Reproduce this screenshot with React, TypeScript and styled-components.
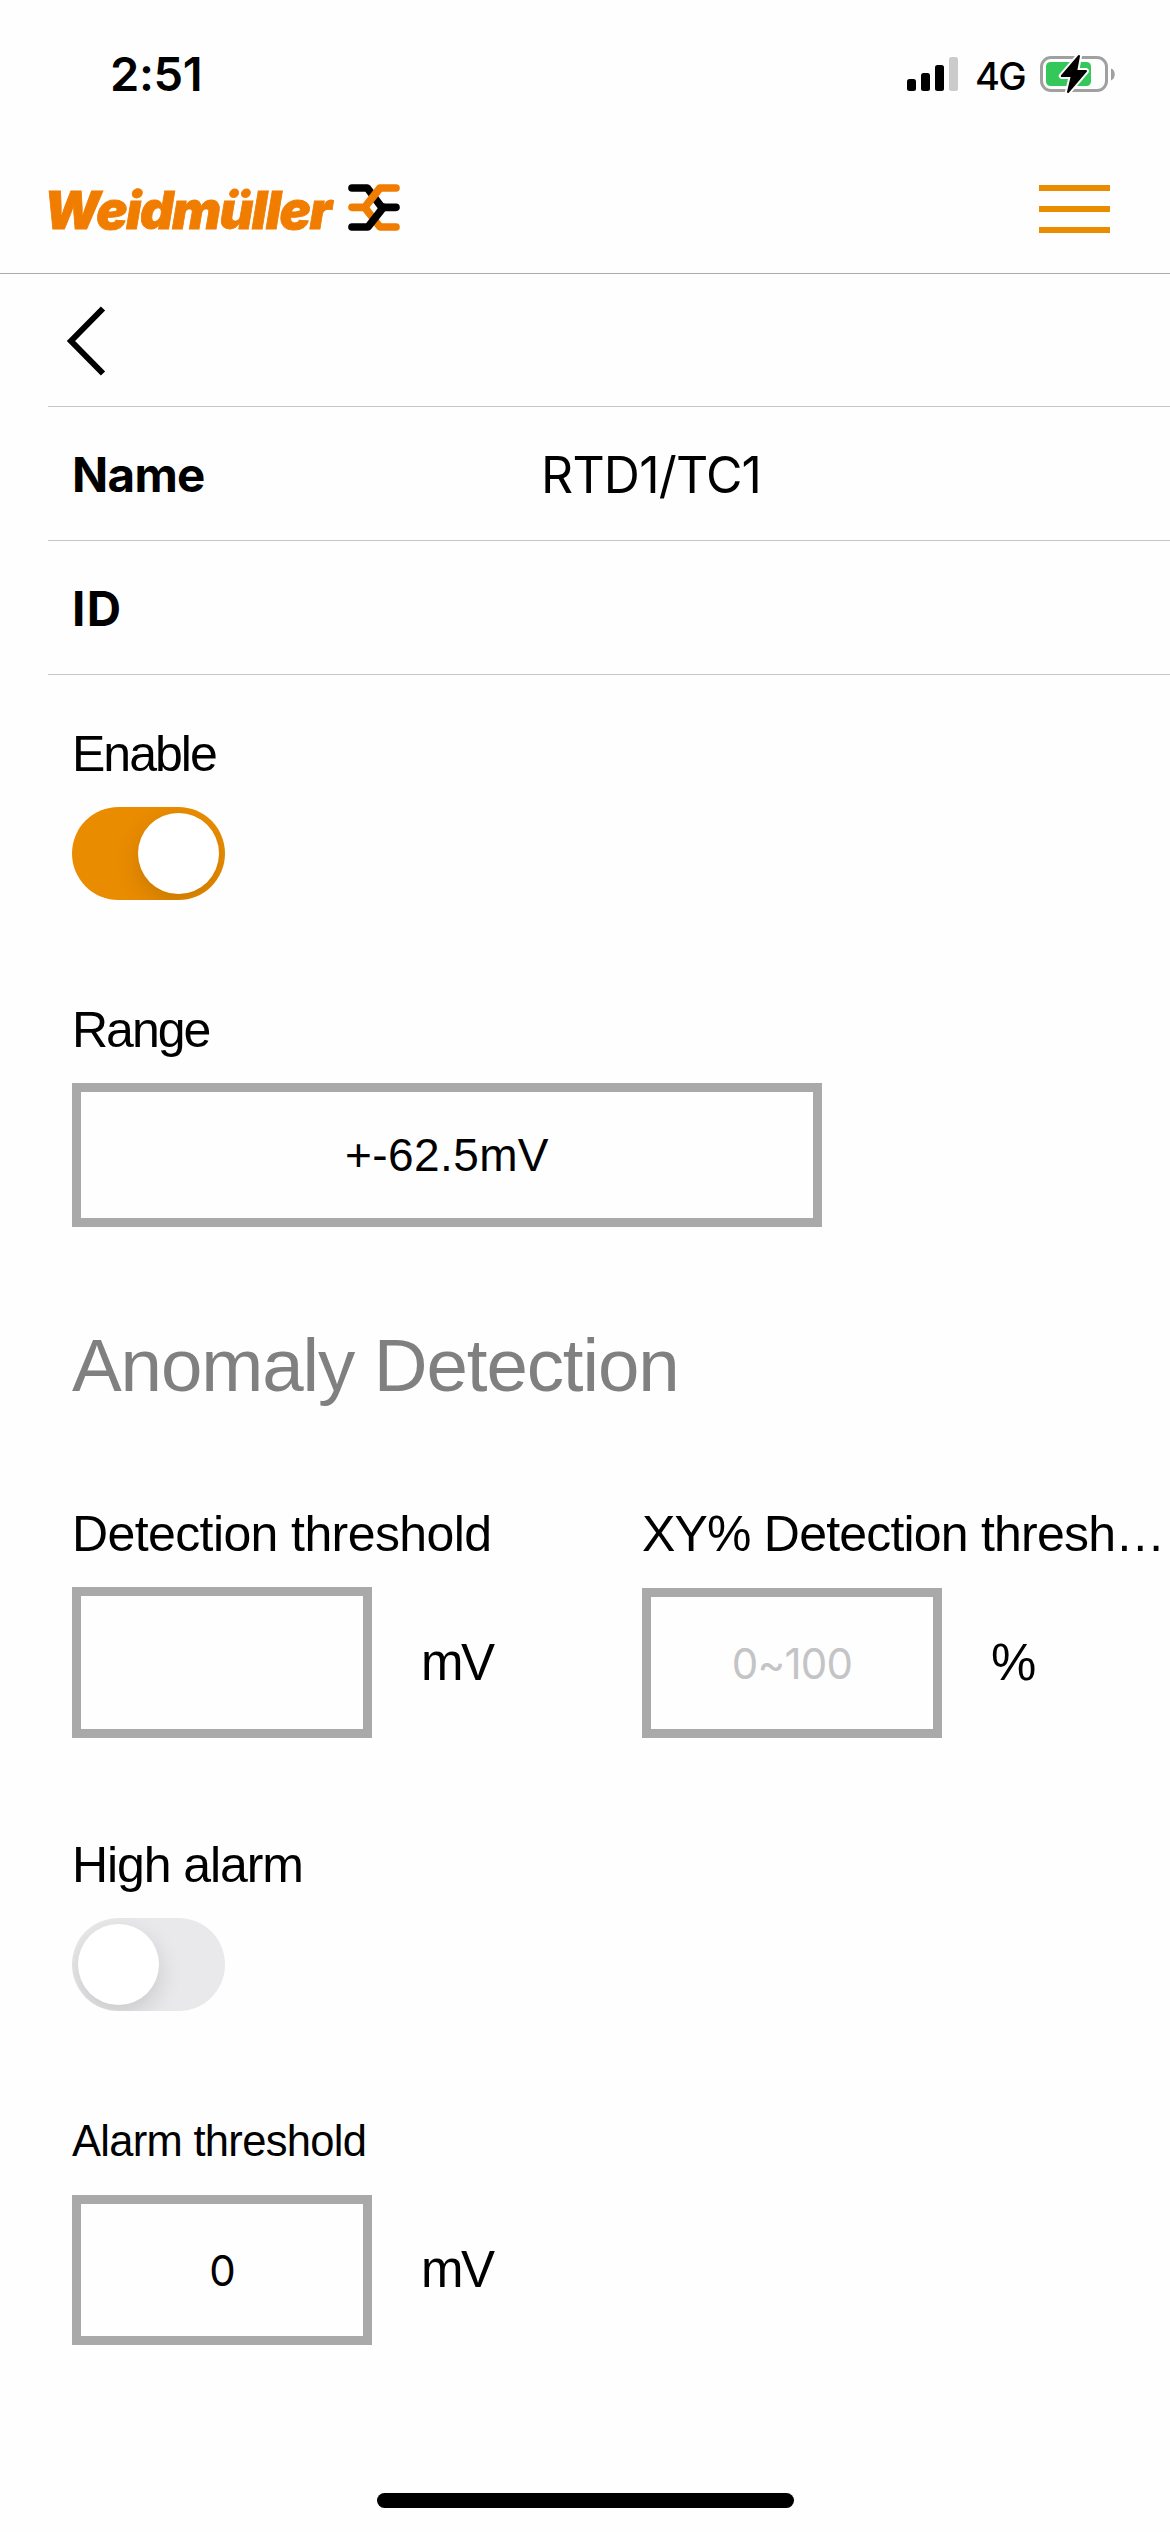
import React, { useState } from "react";
import styled, { createGlobalStyle } from "styled-components";

const GlobalStyle = createGlobalStyle`
  *, *::before, *::after { box-sizing: border-box; }
  body {
    margin: 0;
    background: #fefefe;
    color: #000;
    font-family: "Liberation Sans", Arial, sans-serif;
  }
`;

const Screen = styled.div`
  display: flex;
  flex-direction: column;
  width: 1170px;
  height: 2532px;
  overflow: hidden;
  background: #fefefe;
`;

const StatusBar = styled.div`
  display: flex;
  align-items: center;
  justify-content: space-between;
  height: 144px;
  padding: 4px 54px 0 110px;
  font-family: Inter, sans-serif;
`;

const Clock = styled.span`
  font-size: 47px;
  font-weight: 600;
  line-height: 60px;
  letter-spacing: -0.4px;
`;

const StatusIcons = styled.div`
  display: flex;
  align-items: center;
`;

const Network = styled.span`
  margin: 3px 15px 0 16px;
  width: 50px;
  font-size: 38px;
  font-weight: 500;
  line-height: 50px;
  letter-spacing: -1.6px;
  white-space: nowrap;
`;

const Header = styled.header`
  display: flex;
  align-items: center;
  justify-content: space-between;
  height: 130px;
  padding: 0 60px 0 44px;
  border-bottom: 1px solid #adadb0;
`;

const Brand = styled.div`
  display: flex;
  align-items: center;
  padding-bottom: 3px;
`;

const BrandName = styled.span`
  width: 304px;
  padding-top: 8px;
  color: #f07d00;
  font-family: Inter, sans-serif;
  font-size: 52px;
  font-style: italic;
  font-weight: 900;
  line-height: 60px;
  letter-spacing: -1.5px;
  white-space: nowrap;
  -webkit-text-stroke: 0.8px #f07d00;
`;

const MenuButton = styled.button`
  display: flex;
  flex-direction: column;
  gap: 15px;
  width: 71px;
  padding: 0;
  border: 0;
  background: none;
`;

const MenuLine = styled.span`
  height: 6px;
  background: #ea8c00;
`;

const ListRow = styled.div<{ $height: number }>`
  display: flex;
  align-items: center;
  height: ${(p) => p.$height}px;
  margin-left: 48px;
  padding: 2px 0 0 24px;
  border-bottom: 1px solid #c6c6c8;
  font-family: Inter, sans-serif;
`;

const BackButton = styled.button`
  display: flex;
  margin-left: -6px;
  padding: 0;
  border: 0;
  background: none;
`;

const RowLabel = styled.span<{ $track?: number }>`
  width: 469px;
  font-size: 47.5px;
  font-weight: 700;
  line-height: 60px;
  letter-spacing: ${(p) => p.$track ?? -0.7}px;
`;

const RowValue = styled.span`
  font-size: 50px;
  line-height: 60px;
  letter-spacing: -0.8px;
`;

const Form = styled.main`
  display: flex;
  flex: 1;
  flex-direction: column;
  padding: 49px 0 0 72px;
`;

const Group = styled.section<{ $after: number }>`
  display: flex;
  flex-direction: column;
  align-items: flex-start;
  gap: 23px;
  margin-bottom: ${(p) => p.$after}px;
`;

const Columns = styled.div`
  display: grid;
  grid-template-columns: 570px 1fr;
`;

const Label = styled.span<{ $size?: number; $track?: number }>`
  font-size: ${(p) => p.$size ?? 50}px;
  line-height: 60px;
  letter-spacing: ${(p) => p.$track ?? -0.6}px;
  white-space: nowrap;
`;

const Heading = styled.h2`
  margin: 0 0 93px;
  color: #808080;
  font-size: 74.5px;
  font-weight: 400;
  line-height: 90px;
  letter-spacing: -1.1px;
`;

const Track = styled.button<{ $on: boolean }>`
  display: flex;
  align-items: center;
  justify-content: ${(p) => (p.$on ? "flex-end" : "flex-start")};
  width: 153px;
  height: 93px;
  padding: 0 6px;
  overflow: hidden;
  border: 0;
  border-radius: 47px;
  background: ${(p) => (p.$on ? "#ea8c00" : "#e9e9eb")};
`;

const Thumb = styled.span`
  width: 81px;
  height: 81px;
  border-radius: 50%;
  background: #fff;
  box-shadow: 0 9px 24px rgba(0, 0, 0, 0.14);
`;

const Select = styled.button`
  width: 750px;
  height: 144px;
  padding: 0;
  border: 9px solid #a9a9a9;
  background: transparent;
  color: #000;
  font: 46px/60px "Liberation Sans", Arial, sans-serif;
  letter-spacing: 0.4px;
`;

const Field = styled.div`
  display: flex;
  align-items: center;
`;

const Input = styled.input<{ $height: number }>`
  width: 300px;
  height: ${(p) => p.$height}px;
  margin-top: ${(p) => 151 - p.$height}px;
  padding: 0;
  border: 9px solid #a9a9a9;
  border-radius: 0;
  background: transparent;
  color: #000;
  font: 42px/60px Inter, sans-serif;
  letter-spacing: -0.8px;
  text-align: center;

  &::placeholder {
    color: #c4c4c6;
    opacity: 1;
  }
`;

const Unit = styled.span`
  margin-left: 49px;
  font-size: 51px;
  line-height: 60px;
  letter-spacing: -2.5px;
`;

const HomeIndicator = styled.div`
  width: 417px;
  height: 15px;
  margin: 0 0 24px 377px;
  border-radius: 8px;
  background: #000;
`;

function SignalIcon() {
  return (
    <svg width="52" height="36" viewBox="0 0 52 36">
      <rect x="0" y="23" width="9" height="12" rx="2.5" />
      <rect x="14" y="17" width="9" height="18" rx="2.5" />
      <rect x="28" y="9" width="9" height="26" rx="2.5" />
      <rect x="42" y="1" width="9" height="34" rx="2.5" fill="#cbcbcb" />
    </svg>
  );
}

function BatteryIcon() {
  const bolt = "M39 2 L21.8 22 H31.8 L28 38 L46 17 H36.2 Z";
  return (
    <svg width="76" height="40" viewBox="0 0 76 40">
      <rect x="1.5" y="3.5" width="65" height="33" rx="9.5" fill="none" stroke="#a0a0a0" strokeWidth="3" />
      <path d="M71 14.5 C76 16 76 24.5 71 26.5 Z" fill="#a0a0a0" />
      <rect x="6" y="8" width="45" height="24" rx="4.5" fill="#34c759" />
      <path d={bolt} fill="#fefefe" stroke="#fefefe" strokeWidth="6" strokeLinejoin="round" />
      <path d={bolt} stroke="#000" strokeWidth="2" strokeLinejoin="round" />
    </svg>
  );
}

function BrandMark() {
  return (
    <svg width="52" height="47" viewBox="0 0 156 141" fill="none" strokeWidth="23" strokeLinecap="round" strokeLinejoin="round">
      <path d="M12 12 H58 L101 70 H144" stroke="#000" />
      <path d="M50 70 L96 129 H144" stroke="#f07d00" />
      <path d="M12 70 H50 L96 12 H144" stroke="#f07d00" />
      <path d="M12 129 H60 L106 70" stroke="#000" />
    </svg>
  );
}

function Switch({ initial }: { initial: boolean }) {
  const [on, setOn] = useState(initial);
  return (
    <Track type="button" role="switch" aria-checked={on} $on={on} onClick={() => setOn(!on)}>
      <Thumb />
    </Track>
  );
}

interface ThresholdProps {
  unit: string;
  height?: number;
  value?: string;
  placeholder?: string;
}

function Threshold({ unit, height = 151, value = "", placeholder }: ThresholdProps) {
  return (
    <Field>
      <Input $height={height} defaultValue={value} placeholder={placeholder} />
      <Unit>{unit}</Unit>
    </Field>
  );
}

export default function App() {
  return (
    <>
      <GlobalStyle />
      <Screen>
        <StatusBar>
          <Clock>2:51</Clock>
          <StatusIcons>
            <SignalIcon />
            <Network>4G</Network>
            <BatteryIcon />
          </StatusIcons>
        </StatusBar>

        <Header>
          <Brand>
            <BrandName>Weidmüller</BrandName>
            <BrandMark />
          </Brand>
          <MenuButton type="button">
            <MenuLine />
            <MenuLine />
            <MenuLine />
          </MenuButton>
        </Header>

        <ListRow $height={133}>
          <BackButton type="button">
            <svg width="40" height="70" viewBox="0 0 40 70" fill="none" stroke="#000" strokeWidth="6">
              <path d="M37 2.5 L5 35 L37 67.5" />
            </svg>
          </BackButton>
        </ListRow>
        <ListRow $height={134}>
          <RowLabel>Name</RowLabel>
          <RowValue>RTD1/TC1</RowValue>
        </ListRow>
        <ListRow $height={134}>
          <RowLabel $track={1.5}>ID</RowLabel>
        </ListRow>

        <Form>
          <Group $after={100}>
            <Label $track={-2}>Enable</Label>
            <Switch initial={true} />
          </Group>
          <Group $after={94}>
            <Label $track={-2}>Range</Label>
            <Select type="button">+-62.5mV</Select>
          </Group>

          <Heading>Anomaly Detection</Heading>

          <Columns>
            <Group $after={97}>
              <Label>Detection threshold</Label>
              <Threshold unit="mV" />
            </Group>
            <Group $after={97}>
              <Label $track={-0.8}>XY% Detection thresh…</Label>
              <Threshold unit="%" height={150} placeholder="0~100" />
            </Group>
          </Columns>

          <Group $after={100}>
            <Label $track={-1.1}>High alarm</Label>
            <Switch initial={false} />
          </Group>
          <Group $after={0}>
            <Label $size={43.5} $track={-0.7}>Alarm threshold</Label>
            <Threshold unit="mV" height={150} value="0" />
          </Group>
        </Form>

        <HomeIndicator />
      </Screen>
    </>
  );
}
